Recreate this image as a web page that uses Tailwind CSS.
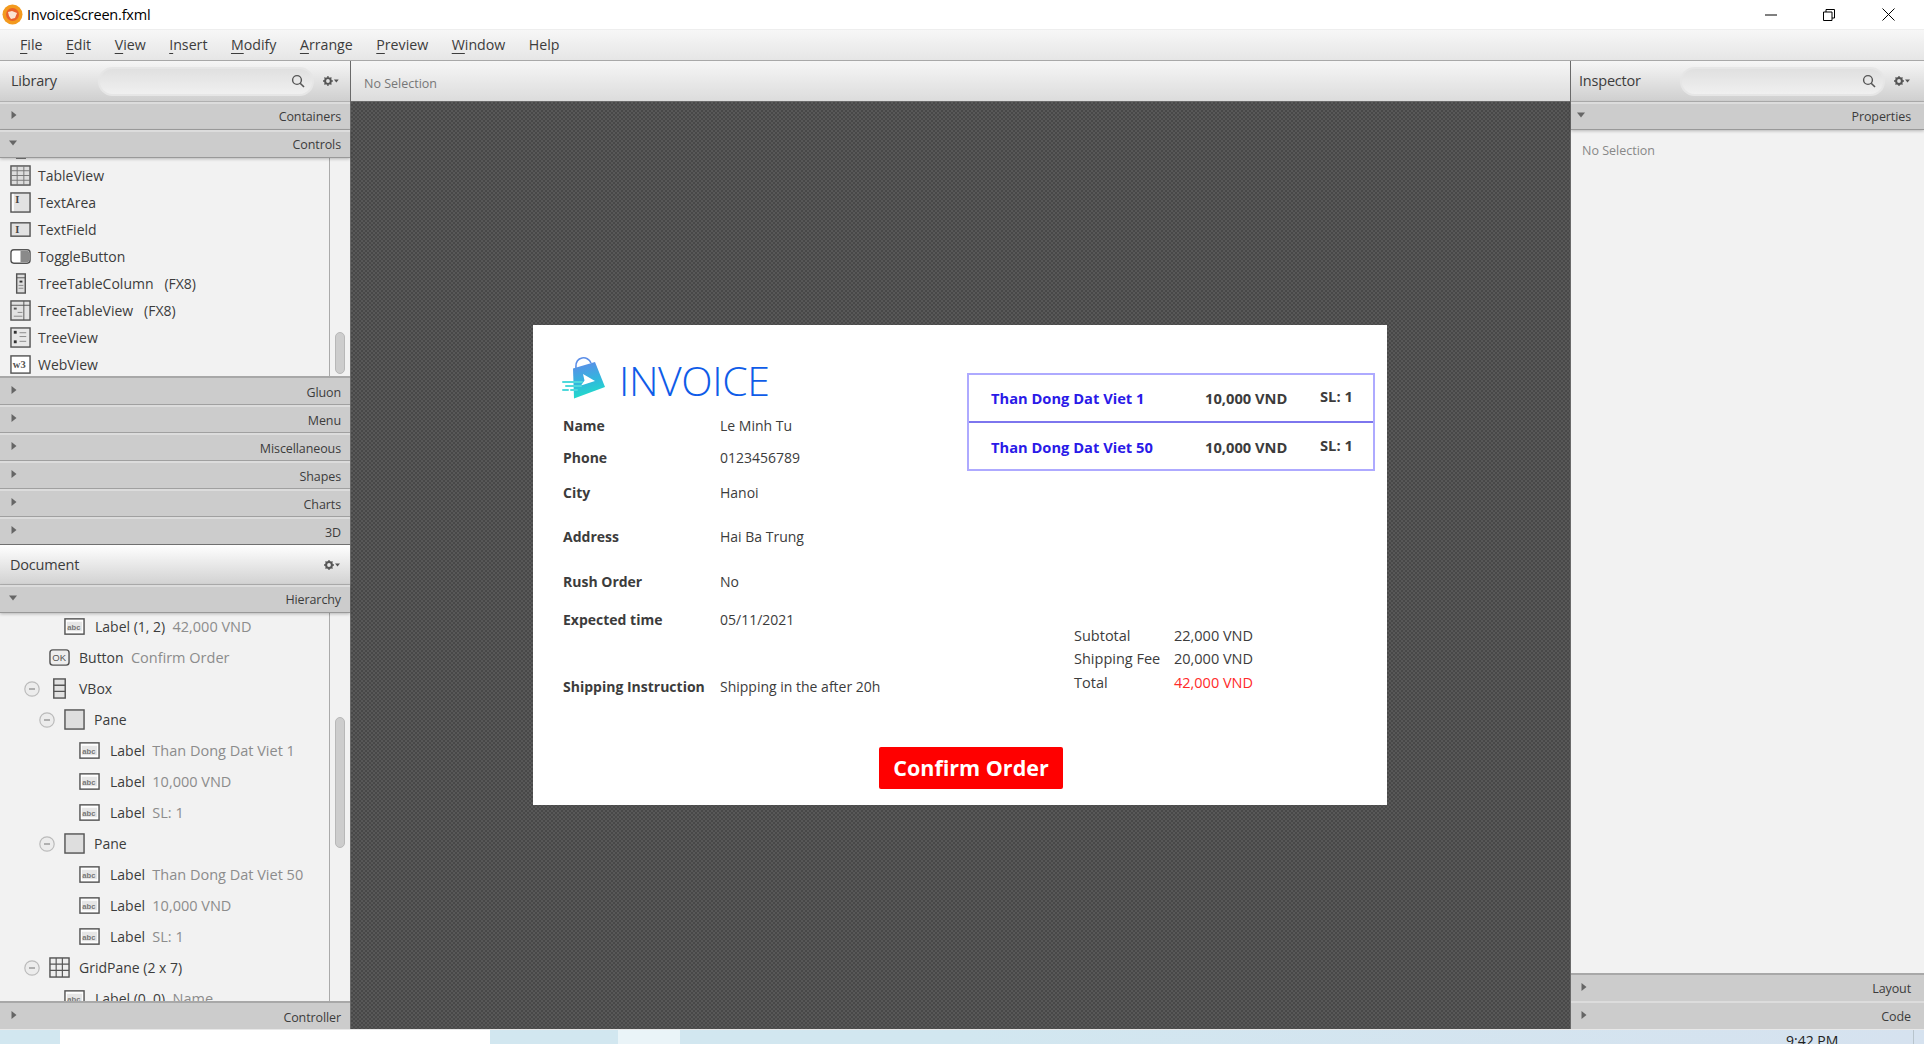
<!DOCTYPE html>
<html lang="en">
<head>
  <meta charset="UTF-8" />
  <title>InvoiceScreen.fxml</title>
  <script src="https://cdn.jsdelivr.net/npm/@tailwindcss/browser@4"></script>
</head>
<body class="w-[1924px] h-[1044px] overflow-hidden bg-white text-[#3c3c3c] font-['Open_Sans',sans-serif] text-[14px]">

  <!-- Icon set -->
  <svg class="hidden" xmlns="http://www.w3.org/2000/svg">
    <symbol id="i-table" viewBox="0 0 22 22"><rect x="1" y="1" width="20" height="20" fill="#ddd" stroke="#555" stroke-width="1.5" /><path d="M1 6h20M1 11h20M1 16h20M7.5 1v20M14.5 1v20" stroke="#777" fill="none" /></symbol>
    <symbol id="i-area" viewBox="0 0 22 22"><rect x="1" y="1" width="20" height="20" fill="#e2e2e2" stroke="#555" stroke-width="1.5" /><rect x="2" y="2" width="2" height="18" fill="#fff" /><text x="5.500" y="11" font-family="Liberation Serif" font-size="11" font-weight="700" fill="#444">I</text></symbol>
    <symbol id="i-field" viewBox="0 0 22 22"><rect x="1" y="4" width="20" height="14" fill="#e2e2e2" stroke="#555" stroke-width="1.5" /><text x="5.500" y="15" font-family="Liberation Serif" font-size="11" font-weight="700" fill="#444">I</text></symbol>
    <symbol id="i-toggle" viewBox="0 0 22 22"><rect x="1" y="4" width="20" height="14" rx="3" fill="#fff" stroke="#555" stroke-width="1.5" /><path d="M11 5h7a2 2 0 0 1 2 2v8a2 2 0 0 1-2 2h-7z" fill="#8a8a8a" /></symbol>
    <symbol id="i-ttcol" viewBox="0 0 22 22"><rect x="7" y="1" width="9" height="20" fill="#ddd" stroke="#555" stroke-width="1.5" /><path d="M7 5h9" stroke="#555" /><rect x="10" y="8" width="3" height="2" fill="#333" /><path d="M9 13h5M9 16h5" stroke="#888" /></symbol>
    <symbol id="i-ttview" viewBox="0 0 22 22"><rect x="1" y="1" width="20" height="20" fill="#e2e2e2" stroke="#555" stroke-width="1.5" /><path d="M1 5.500h20M14.500 1v20" stroke="#555" /><rect x="4" y="8" width="3" height="2" fill="#555" /><path d="M8 13h5M4 17h9" stroke="#888" /></symbol>
    <symbol id="i-tree" viewBox="0 0 22 22"><rect x="1" y="1" width="20" height="20" fill="#e8e8e8" stroke="#555" stroke-width="1.5" /><rect x="4" y="4" width="3" height="3" fill="#333" /><rect x="4" y="14" width="3" height="3" fill="#333" /><path d="M10 6h7M10 10h7M10 15h7" stroke="#888" /></symbol>
    <symbol id="i-web" viewBox="0 0 22 22"><rect x="1" y="2" width="20" height="18" fill="#fff" stroke="#555" stroke-width="1.5" /><text x="3" y="15" font-family="Liberation Serif" font-size="11" font-weight="700" fill="#555">w3</text></symbol>
    <symbol id="i-abc" viewBox="0 0 22 22"><rect x="1" y="3" width="20" height="16" fill="#fff" stroke="#555" stroke-width="1.5" /><rect x="3" y="6" width="16" height="10" fill="#e6e6e6" /><text x="3.500" y="14.500" font-family="Liberation Sans" font-size="8" font-weight="700" fill="#777">abc</text></symbol>
    <symbol id="i-ok" viewBox="0 0 22 22"><rect x="1" y="3" width="20" height="16" rx="3" fill="#eee" stroke="#555" stroke-width="1.5" /><text x="3.500" y="15" font-family="Liberation Sans" font-size="10" fill="#555">OK</text></symbol>
    <symbol id="i-vbox" viewBox="0 0 22 22"><rect x="5" y="1" width="12" height="20" fill="#e2e2e2" stroke="#555" stroke-width="1.5" /><path d="M5 7.500h12M5 14h12" stroke="#555" stroke-width="1.5" /></symbol>
    <symbol id="i-pane" viewBox="0 0 22 22"><rect x="1" y="1" width="20" height="20" fill="#dedede" stroke="#555" stroke-width="1.5" /></symbol>
    <symbol id="i-grid" viewBox="0 0 22 22"><rect x="1" y="1" width="20" height="20" fill="#eee" stroke="#555" stroke-width="1.5" /><path d="M1 7.500h20M1 14h20M7.500 1v20M14 1v20" stroke="#555" stroke-width="1.2" /></symbol>
    <symbol id="i-minus" viewBox="0 0 16 16"><circle cx="8" cy="8" r="7.200" fill="#ececec" stroke="#bbb" stroke-width="1.2" /><path d="M5 8h6" stroke="#888" stroke-width="1.2" /></symbol>
    <symbol id="i-search" viewBox="0 0 14 14"><circle cx="6" cy="6" r="4.400" fill="none" stroke="#555" stroke-width="1.4" /><path d="M9.200 9.200l3.800 3.800" stroke="#555" stroke-width="1.6" /></symbol>
    <symbol id="i-gear" viewBox="0 0 16 10"><circle cx="5" cy="5" r="2.900" fill="none" stroke="#555" stroke-width="2" /><path d="M5 0v2M5 8v2M0 5h2M8 5h2M1.500 1.500l1.400 1.400M7.100 7.100l1.400 1.400M8.500 1.500L7.100 2.900M2.900 7.100L1.500 8.500" stroke="#555" stroke-width="1.3" /><path d="M11 3.500h5l-2.500 3z" fill="#555" /></symbol>
    <symbol id="i-right" viewBox="0 0 6 8"><path d="M0.500 0l5 4-5 4z" fill="#666" /></symbol>
    <symbol id="i-down" viewBox="0 0 8 6"><path d="M0 0.500h8l-4 5z" fill="#666" /></symbol>
  </svg>

  <!-- Title bar -->
  <div class="h-[29px] flex items-center bg-white text-black">
    <svg class="w-[21px] h-[21px] ml-[2px]" viewBox="0 0 21 21">
      <circle cx="10.500" cy="10.500" r="10" fill="#f39a1e" />
      <circle cx="10.500" cy="10.500" r="6.500" fill="#e9602a" />
      <path d="M6 8l4-1 5 2-2 5-4 1-2-3z" fill="#fbe3d2" />
    </svg>
    <span class="ml-[4px] text-[14.5px] tracking-[-0.2px] text-black">InvoiceScreen.fxml</span>
    <div class="ml-auto flex items-center h-full">
      <svg class="w-[12px] h-[12px] mr-[46px]" viewBox="0 0 12 12"><path d="M0 6h12" stroke="#000" /></svg>
      <svg class="w-[12px] h-[12px] mr-[47px]" viewBox="0 0 12 12"><path d="M.5 3h8.500v8.500h-8.500zM3 3V.5h8.500V9H9" fill="none" stroke="#000" /></svg>
      <svg class="w-[13px] h-[13px] mr-[29px]" viewBox="0 0 13 13"><path d="M.5.5l12 12M12.500.5l-12 12" stroke="#000" /></svg>
    </div>
  </div>

  <!-- Menu bar -->
  <div class="h-[32px] flex items-center gap-[23.5px] pl-[20px] pb-[1px] bg-gradient-to-b from-[#f7f7f7] to-[#e6e6e6] border-t border-[#eeeeee] border-b border-b-[#a8a8a8] text-[14.2px]">
    <span><span class="underline underline-offset-3">F</span>ile</span>
    <span><span class="underline underline-offset-3">E</span>dit</span>
    <span><span class="underline underline-offset-3">V</span>iew</span>
    <span><span class="underline underline-offset-3">I</span>nsert</span>
    <span><span class="underline underline-offset-3">M</span>odify</span>
    <span><span class="underline underline-offset-3">A</span>rrange</span>
    <span><span class="underline underline-offset-3">P</span>review</span>
    <span><span class="underline underline-offset-3">W</span>indow</span>
    <span>Help</span>
  </div>

  <div class="flex h-[968px]">

    <!-- Left column -->
    <div class="w-[351px] shrink-0 flex flex-col bg-[#f2f2f2] border-r border-[#6a6a6a]">
      <div class="h-[41px] shrink-0 flex items-center pl-[11px] pr-[11px] bg-gradient-to-b from-[#f6f6f6] to-[#cfcfcf] border-b border-[#b0b0b0]">
        <span class="text-[14.5px] tracking-[-0.2px]">Library</span>
        <div class="ml-[41px] w-[219px] h-[29px] rounded-full border-2 border-[#e6e6e6] bg-gradient-to-b from-[#e0e0e0] to-[#f0f0f0] flex items-center justify-end pr-[7px]">
          <svg class="w-[14px] h-[14px]"><use href="#i-search" /></svg>
        </div>
        <svg class="ml-[9px] w-[16px] h-[10px]"><use href="#i-gear" /></svg>
      </div>

      <div class="h-[28px] shrink-0 flex items-center justify-between pl-[11px] pr-[9px] pt-[1px] bg-[#cccccc] border-t-2 border-[#dcdcdc] border-b border-b-[#a0a0a0] text-[12.5px] tracking-[-0.1px]"><svg class="w-[6px] h-[8px] -mt-[5px]"><use href="#i-right" /></svg><span>Containers</span></div>
      <div class="h-[28px] shrink-0 flex items-center justify-between pl-[9px] pr-[9px] pt-[1px] bg-[#cccccc] border-t-2 border-[#dcdcdc] border-b border-b-[#999999] shadow-[0_1px_3px_rgba(0,0,0,0.25)] z-10 text-[12.5px] tracking-[-0.1px]"><svg class="w-[8px] h-[6px] -mt-[5px]"><use href="#i-down" /></svg><span>Controls</span></div>

      <!-- Library list -->
      <div class="h-[220px] shrink-0 flex overflow-hidden border-b-2 border-[#a8a8a8]">
        <div class="w-[330px] -mt-[23px] pl-[10px] border-r border-[#aaaaaa]">
          <div class="h-[27px] flex items-center gap-[7px]"><svg class="w-[21px] h-[21px]"><use href="#i-ttcol" /></svg><span>TableColumn</span></div>
          <div class="h-[27px] flex items-center gap-[7px]"><svg class="w-[21px] h-[21px]"><use href="#i-table" /></svg><span>TableView</span></div>
          <div class="h-[27px] flex items-center gap-[7px]"><svg class="w-[21px] h-[21px]"><use href="#i-area" /></svg><span>TextArea</span></div>
          <div class="h-[27px] flex items-center gap-[7px]"><svg class="w-[21px] h-[21px]"><use href="#i-field" /></svg><span>TextField</span></div>
          <div class="h-[27px] flex items-center gap-[7px]"><svg class="w-[21px] h-[21px]"><use href="#i-toggle" /></svg><span>ToggleButton</span></div>
          <div class="h-[27px] flex items-center gap-[7px]"><svg class="w-[21px] h-[21px]"><use href="#i-ttcol" /></svg><span class="whitespace-pre">TreeTableColumn   (FX8)</span></div>
          <div class="h-[27px] flex items-center gap-[7px]"><svg class="w-[21px] h-[21px]"><use href="#i-ttview" /></svg><span class="whitespace-pre">TreeTableView   (FX8)</span></div>
          <div class="h-[27px] flex items-center gap-[7px]"><svg class="w-[21px] h-[21px]"><use href="#i-tree" /></svg><span>TreeView</span></div>
          <div class="h-[27px] flex items-center gap-[7px]"><svg class="w-[21px] h-[21px]"><use href="#i-web" /></svg><span>WebView</span></div>
        </div>
        <div class="w-[20px] pl-[5px] pt-[174px]">
          <div class="w-[10px] h-[42px] rounded-full bg-[#cdcdcd] border border-[#b8b8b8]"></div>
        </div>
      </div>

      <div class="h-[27px] shrink-0 flex items-center justify-between pl-[11px] pr-[9px] pt-[4px] bg-[#cccccc] border-b border-b-[#a0a0a0] text-[12.5px] tracking-[-0.1px]"><svg class="w-[6px] h-[8px] -mt-[6px]"><use href="#i-right" /></svg><span>Gluon</span></div>
      <div class="h-[28px] shrink-0 flex items-center justify-between pl-[11px] pr-[9px] pt-[3px] bg-[#cccccc] border-t-2 border-[#dcdcdc] border-b border-b-[#a0a0a0] text-[12.5px] tracking-[-0.1px]"><svg class="w-[6px] h-[8px] -mt-[6px]"><use href="#i-right" /></svg><span>Menu</span></div>
      <div class="h-[28px] shrink-0 flex items-center justify-between pl-[11px] pr-[9px] pt-[3px] bg-[#cccccc] border-t-2 border-[#dcdcdc] border-b border-b-[#a0a0a0] text-[12.5px] tracking-[-0.1px]"><svg class="w-[6px] h-[8px] -mt-[6px]"><use href="#i-right" /></svg><span>Miscellaneous</span></div>
      <div class="h-[28px] shrink-0 flex items-center justify-between pl-[11px] pr-[9px] pt-[3px] bg-[#cccccc] border-t-2 border-[#dcdcdc] border-b border-b-[#a0a0a0] text-[12.5px] tracking-[-0.1px]"><svg class="w-[6px] h-[8px] -mt-[6px]"><use href="#i-right" /></svg><span>Shapes</span></div>
      <div class="h-[28px] shrink-0 flex items-center justify-between pl-[11px] pr-[9px] pt-[3px] bg-[#cccccc] border-t-2 border-[#dcdcdc] border-b border-b-[#a0a0a0] text-[12.5px] tracking-[-0.1px]"><svg class="w-[6px] h-[8px] -mt-[6px]"><use href="#i-right" /></svg><span>Charts</span></div>
      <div class="h-[28px] shrink-0 flex items-center justify-between pl-[11px] pr-[9px] pt-[3px] bg-[#cccccc] border-t-2 border-[#dcdcdc] border-b border-b-[#707070] text-[12.5px] tracking-[-0.1px]"><svg class="w-[6px] h-[8px] -mt-[6px]"><use href="#i-right" /></svg><span>3D</span></div>

      <div class="h-[40px] shrink-0 flex items-center justify-between pl-[10px] pr-[10px] bg-gradient-to-b from-[#ffffff] to-[#d2d2d2] border-b border-[#b0b0b0]">
        <span class="text-[14.5px] tracking-[-0.2px]">Document</span>
        <svg class="w-[16px] h-[10px]"><use href="#i-gear" /></svg>
      </div>
      <div class="h-[28px] shrink-0 flex items-center justify-between pl-[9px] pr-[9px] pt-[1px] bg-[#cccccc] border-t-2 border-[#dcdcdc] border-b border-b-[#999999] shadow-[0_1px_3px_rgba(0,0,0,0.25)] z-10 text-[12.5px] tracking-[-0.1px]"><svg class="w-[8px] h-[6px] -mt-[5px]"><use href="#i-down" /></svg><span>Hierarchy</span></div>

      <!-- Hierarchy tree -->
      <div class="flex-1 min-h-0 flex overflow-hidden">
        <div class="w-[330px] -mt-[2px] border-r border-[#aaaaaa]">
          <div class="h-[31px] flex items-center gap-[10px] pl-[64px]"><svg class="w-[21px] h-[21px]"><use href="#i-abc" /></svg><span>Label (1, 2)&nbsp; <span class="text-[14.5px] text-[#8c8c8c]">42,000 VND</span></span></div>
          <div class="h-[31px] flex items-center gap-[9px] pl-[49px]"><svg class="w-[21px] h-[21px]"><use href="#i-ok" /></svg><span>Button&nbsp; <span class="text-[14.5px] text-[#8c8c8c]">Confirm Order</span></span></div>
          <div class="h-[31px] flex items-center pl-[24px]"><svg class="w-[16px] h-[16px]"><use href="#i-minus" /></svg><svg class="ml-[9px] w-[21px] h-[21px]"><use href="#i-vbox" /></svg><span class="ml-[9px]">VBox</span></div>
          <div class="h-[31px] flex items-center pl-[39px]"><svg class="w-[16px] h-[16px]"><use href="#i-minus" /></svg><svg class="ml-[9px] w-[21px] h-[21px]"><use href="#i-pane" /></svg><span class="ml-[9px]">Pane</span></div>
          <div class="h-[31px] flex items-center gap-[10px] pl-[79px]"><svg class="w-[21px] h-[21px]"><use href="#i-abc" /></svg><span>Label&nbsp; <span class="text-[14.5px] text-[#8c8c8c]">Than Dong Dat Viet 1</span></span></div>
          <div class="h-[31px] flex items-center gap-[10px] pl-[79px]"><svg class="w-[21px] h-[21px]"><use href="#i-abc" /></svg><span>Label&nbsp; <span class="text-[14.5px] text-[#8c8c8c]">10,000 VND</span></span></div>
          <div class="h-[31px] flex items-center gap-[10px] pl-[79px]"><svg class="w-[21px] h-[21px]"><use href="#i-abc" /></svg><span>Label&nbsp; <span class="text-[14.5px] text-[#8c8c8c]">SL: 1</span></span></div>
          <div class="h-[31px] flex items-center pl-[39px]"><svg class="w-[16px] h-[16px]"><use href="#i-minus" /></svg><svg class="ml-[9px] w-[21px] h-[21px]"><use href="#i-pane" /></svg><span class="ml-[9px]">Pane</span></div>
          <div class="h-[31px] flex items-center gap-[10px] pl-[79px]"><svg class="w-[21px] h-[21px]"><use href="#i-abc" /></svg><span>Label&nbsp; <span class="text-[14.5px] text-[#8c8c8c]">Than Dong Dat Viet 50</span></span></div>
          <div class="h-[31px] flex items-center gap-[10px] pl-[79px]"><svg class="w-[21px] h-[21px]"><use href="#i-abc" /></svg><span>Label&nbsp; <span class="text-[14.5px] text-[#8c8c8c]">10,000 VND</span></span></div>
          <div class="h-[31px] flex items-center gap-[10px] pl-[79px]"><svg class="w-[21px] h-[21px]"><use href="#i-abc" /></svg><span>Label&nbsp; <span class="text-[14.5px] text-[#8c8c8c]">SL: 1</span></span></div>
          <div class="h-[31px] flex items-center pl-[24px]"><svg class="w-[16px] h-[16px]"><use href="#i-minus" /></svg><svg class="ml-[9px] w-[21px] h-[21px]"><use href="#i-grid" /></svg><span class="ml-[9px]">GridPane (2 x 7)</span></div>
          <div class="h-[31px] flex items-center gap-[10px] pl-[64px]"><svg class="w-[21px] h-[21px]"><use href="#i-abc" /></svg><span>Label (0, 0)&nbsp; <span class="text-[14.5px] text-[#8c8c8c]">Name</span></span></div>
        </div>
        <div class="w-[20px] pl-[5px] pt-[104px]">
          <div class="w-[10px] h-[131px] rounded-full bg-[#cdcdcd] border border-[#b8b8b8]"></div>
        </div>
      </div>

      <div class="h-[28px] shrink-0 flex items-center justify-between pl-[11px] pr-[9px] pt-[4px] bg-[#cccccc] border-t-2 border-[#a8a8a8] text-[12.5px] tracking-[-0.1px]"><svg class="w-[6px] h-[8px] -mt-[6px]"><use href="#i-right" /></svg><span>Controller</span></div>
    </div>

    <!-- Canvas column -->
    <div class="flex-1 min-w-0 flex flex-col">
      <div class="h-[41px] shrink-0 flex items-center pl-[13px] pt-[7px] bg-gradient-to-b from-[#f6f6f6] to-[#dcdcdc] border-b border-[#6a6a6a] text-[12.5px] text-[#777777]">No Selection</div>
      <div class="flex-1 min-h-0 flex items-center justify-center bg-[#505050] bg-[repeating-conic-gradient(#484848_0_25%,#585858_0_50%)] bg-size-[4px_4px]">

        <!-- Invoice form -->
        <div class="w-[854px] h-[480px] mr-[1px] mb-[1px] bg-white flex flex-col">
          <div class="h-[422px] flex">
            <div class="w-[434px] shrink-0 pl-[30px]">
              <div class="h-[85px] flex items-start pt-[32px]">
                <svg class="w-[44px] h-[42px] -ml-[1px]" viewBox="12 7 44 42">
                  <defs>
                    <linearGradient id="bag" x1="0.4" y1="0" x2="0.6" y2="1">
                      <stop offset="0" stop-color="#5b8ee8" />
                      <stop offset="0.5" stop-color="#33b5de" />
                      <stop offset="1" stop-color="#1ee3c6" />
                    </linearGradient>
                  </defs>
                  <path d="M26 18C25 6 38 5 41 13" fill="none" stroke="#5b8ee8" stroke-width="1.6" />
                  <path d="M23 18.500L45 12 55 37 24 48.500z" fill="url(#bag)" />
                  <path d="M33 24l12 7-14 4.500 3.500-5z" fill="#fff" />
                  <path d="M13 32h19M16 36h15M13 40h5M21 40h6" stroke="#4fd9dc" stroke-width="2" stroke-linecap="round" />
                </svg>
                <span class="ml-[13px] -mt-[1px] text-[41px] leading-[48px] font-light tracking-[-0.4px] text-[#0f5ce8]">INVOICE</span>
              </div>
              <div class="grid grid-cols-[157px_auto] grid-rows-[31px_33px_36px_52px_38px_38px_96px] items-center">
                <span class="font-bold">Name</span><span>Le Minh Tu</span>
                <span class="font-bold">Phone</span><span>0123456789</span>
                <span class="font-bold">City</span><span>Hanoi</span>
                <span class="font-bold">Address</span><span>Hai Ba Trung</span>
                <span class="font-bold">Rush Order</span><span>No</span>
                <span class="font-bold">Expected time</span><span>05/11/2021</span>
                <span class="font-bold whitespace-nowrap">Shipping Instruction</span><span>Shipping in the after 20h</span>
              </div>
            </div>

            <div class="flex-1 pt-[48px]">
              <div class="w-[408px] h-[98px] border-2 border-[#aeaaff] flex flex-col font-bold text-[14.7px]">
                <div class="h-[48px] shrink-0 flex items-center pl-[22px] border-b-2 border-[#7d76ee]">
                  <span class="w-[214px] text-[#2a1ae8]">Than Dong Dat Viet 1</span>
                  <span class="w-[115px]">10,000 VND</span>
                  <span class="mb-[3px]">SL: 1</span>
                </div>
                <div class="flex-1 flex items-center pl-[22px] pt-[2px]">
                  <span class="w-[214px] text-[#2a1ae8]">Than Dong Dat Viet 50</span>
                  <span class="w-[115px]">10,000 VND</span>
                  <span class="mb-[3px]">SL: 1</span>
                </div>
              </div>
              <div class="mt-[153px] ml-[107px] grid grid-cols-[100px_auto] auto-rows-[23.5px] items-center text-[14.5px]">
                <span>Subtotal</span><span>22,000 VND</span>
                <span>Shipping Fee</span><span>20,000 VND</span>
                <span>Total</span><span class="text-[#ff2a2a]">42,000 VND</span>
              </div>
            </div>
          </div>
          <div class="pl-[346px]">
            <button class="w-[184px] h-[42px] bg-[#ff0000] rounded-[2px] text-white text-[21.5px] font-bold">Confirm Order</button>
          </div>
        </div>
      </div>
    </div>

    <!-- Right column -->
    <div class="w-[354px] shrink-0 flex flex-col bg-[#f2f2f2] border-l border-[#6a6a6a]">
      <div class="h-[41px] shrink-0 flex items-center pl-[8px] bg-gradient-to-b from-[#f6f6f6] to-[#cfcfcf] border-b border-[#b0b0b0]">
        <span class="text-[14.5px] tracking-[-0.2px]">Inspector</span>
        <div class="ml-[39px] w-[205px] h-[29px] rounded-full border-2 border-[#e6e6e6] bg-gradient-to-b from-[#e0e0e0] to-[#f0f0f0] flex items-center justify-end pr-[7px]">
          <svg class="w-[14px] h-[14px]"><use href="#i-search" /></svg>
        </div>
        <svg class="ml-[9px] w-[16px] h-[10px]"><use href="#i-gear" /></svg>
      </div>
      <div class="h-[28px] shrink-0 flex items-center justify-between pl-[6px] pr-[13px] pt-[1px] bg-[#cccccc] border-t-2 border-[#dcdcdc] border-b border-b-[#999999] shadow-[0_1px_3px_rgba(0,0,0,0.25)] text-[12.5px] tracking-[-0.1px]"><svg class="w-[8px] h-[6px] -mt-[5px]"><use href="#i-down" /></svg><span>Properties</span></div>
      <div class="flex-1 min-h-0 pl-[11px] pt-[12px] text-[12.5px] text-[#888888]">No Selection</div>
      <div class="h-[28px] shrink-0 flex items-center justify-between pl-[10px] pr-[13px] pt-[3px] bg-[#cccccc] border-t-2 border-[#a8a8a8] text-[12.5px] tracking-[-0.1px]"><svg class="w-[6px] h-[8px] -mt-[6px]"><use href="#i-right" /></svg><span>Layout</span></div>
      <div class="h-[28px] shrink-0 flex items-center justify-between pl-[10px] pr-[13px] pt-[3px] bg-[#cccccc] border-t-2 border-[#dcdcdc] text-[12.5px] tracking-[-0.1px]"><svg class="w-[6px] h-[8px] -mt-[6px]"><use href="#i-right" /></svg><span>Code</span></div>
    </div>
  </div>

  <!-- Taskbar strip (cut off at the bottom of the shot) -->
  <div class="h-[15px] flex overflow-hidden border-t border-[#e8e8e8] bg-gradient-to-r from-[#d2e7f0] via-[#d2e7f0] to-[#d6e2ef]">
    <div class="w-[60px]"></div>
    <div class="w-[430px] bg-white"></div>
    <div class="w-[128px]"></div>
    <div class="w-[62px] bg-[#eaf4f8]"></div>
    <div class="ml-[1106px] w-[127px] text-[14px] leading-[16px] pt-[3px] text-[#222222]">9:42 PM</div>
    <div class="w-[1px] bg-[#b8c4cc]"></div>
  </div>
</body>
</html>
